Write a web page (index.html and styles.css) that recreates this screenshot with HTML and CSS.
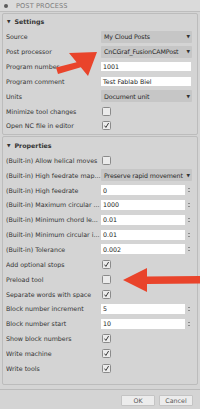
FILE: index.html
```html
<!DOCTYPE html>
<html>
<head>
<meta charset="utf-8">
<link rel="stylesheet" href="styles.css">
</head>
<body>
<div class="panel">
  <div class="titlebar"><span class="dot"></span><span class="title">POST PROCESS</span></div>
  <div class="content">
    <div class="group">
      <div class="group-head"><span class="tri">▼</span>Settings</div>
      <div class="row"><span class="label">Source</span><span class="select"><span class="val">My Cloud Posts</span><span class="caret">▼</span></span></div>
      <div class="row"><span class="label">Post processor</span><span class="select"><span class="val">CnCGraf_FusionCAMPost</span><span class="caret">▼</span></span></div>
      <div class="row"><span class="label">Program number</span><span class="text">1001</span></div>
      <div class="row"><span class="label">Program comment</span><span class="text">Test Fablab Biel</span></div>
      <div class="row"><span class="label">Units</span><span class="select"><span class="val">Document unit</span><span class="caret">▼</span></span></div>
      <div class="row"><span class="label">Minimize tool changes</span><span class="check"></span></div>
      <div class="row"><span class="label">Open NC file in editor</span><span class="check on"><svg viewBox="0 0 8 8"><path d="M1.8 4.2 L3.3 6.2 L6.4 1.2"/></svg></span></div>
    </div>
    <div class="group props">
      <div class="group-head"><span class="tri">▼</span>Properties</div>
      <div class="row"><span class="label">(Built-in) Allow helical moves</span><span class="check"></span></div>
      <div class="row"><span class="label">(Built-in) High feedrate map...</span><span class="select"><span class="val">Preserve rapid movement</span><span class="caret">▼</span></span></div>
      <div class="row"><span class="label">(Built-in) High feedrate</span><span class="num"><span class="field">0</span><span class="spin"><i class="up"></i><i class="down"></i></span></span></div>
      <div class="row"><span class="label">(Built-in) Maximum circular ...</span><span class="num"><span class="field">1000</span><span class="spin"><i class="up"></i><i class="down"></i></span></span></div>
      <div class="row"><span class="label">(Built-in) Minimum chord le...</span><span class="num"><span class="field">0.01</span><span class="spin"><i class="up"></i><i class="down"></i></span></span></div>
      <div class="row"><span class="label">(Built-in) Minimum circular i...</span><span class="num"><span class="field">0.01</span><span class="spin"><i class="up"></i><i class="down"></i></span></span></div>
      <div class="row"><span class="label">(Built-in) Tolerance</span><span class="num"><span class="field">0.002</span><span class="spin"><i class="up"></i><i class="down"></i></span></span></div>
      <div class="row"><span class="label">Add optional stops</span><span class="check on"><svg viewBox="0 0 8 8"><path d="M1.8 4.2 L3.3 6.2 L6.4 1.2"/></svg></span></div>
      <div class="row"><span class="label">Preload tool</span><span class="check"></span></div>
      <div class="row"><span class="label">Separate words with space</span><span class="check on"><svg viewBox="0 0 8 8"><path d="M1.8 4.2 L3.3 6.2 L6.4 1.2"/></svg></span></div>
      <div class="row"><span class="label">Block number increment</span><span class="num"><span class="field">5</span><span class="spin"><i class="up"></i><i class="down"></i></span></span></div>
      <div class="row"><span class="label">Block number start</span><span class="num"><span class="field">10</span><span class="spin"><i class="up"></i><i class="down"></i></span></span></div>
      <div class="row"><span class="label">Show block numbers</span><span class="check on"><svg viewBox="0 0 8 8"><path d="M1.8 4.2 L3.3 6.2 L6.4 1.2"/></svg></span></div>
      <div class="row"><span class="label">Write machine</span><span class="check on"><svg viewBox="0 0 8 8"><path d="M1.8 4.2 L3.3 6.2 L6.4 1.2"/></svg></span></div>
      <div class="row"><span class="label">Write tools</span><span class="check on"><svg viewBox="0 0 8 8"><path d="M1.8 4.2 L3.3 6.2 L6.4 1.2"/></svg></span></div>
    </div>
  </div>
  <div class="footer">
    <span class="btn ok">OK</span>
    <span class="btn cancel">Cancel</span>
  </div>
  <svg class="arrows" viewBox="0 0 200 409" width="200" height="409">
    <polygon points="97,52 88,76 80.8,67.3 58,74 56,67.5 76.6,62.2 69,53"/>
    <polygon points="123,280 147,268 147,276.5 200,276 200,283.5 147,284 147,292"/>
  </svg>
</div>
</body>
</html>
```

FILE: styles.css
```css
html, body {
  margin: 0;
  padding: 0;
  background: #d4d4d4;
}
body {
  width: 200px;
  height: 409px;
  overflow: hidden;
  font-family: "DejaVu Sans", "Liberation Sans", sans-serif;
  font-size: 6.3px;
  color: #2e2e2e;
}
.panel {
  position: relative;
  width: 200px;
  height: 409px;
  display: flex;
  flex-direction: column;
}
.titlebar {
  height: 12px;
  border-bottom: 1px solid #bdbdbd;
  background: #dadada;
  display: flex;
  align-items: center;
}
.dot {
  width: 4px;
  height: 4px;
  border-radius: 2px;
  background: #5c5c5c;
  margin-left: 4px;
  margin-right: 8px;
}
.title {
  color: #7c7c7c;
  font-size: 6.6px;
  letter-spacing: 0.1px;
}
.content {
  padding: 1px 2px 4px 2px;
  display: flex;
  flex-direction: column;
  gap: 1px;
}
.group {
  border: 1px solid #bcbcbc;
  border-radius: 2px;
  padding: 0 4px 1px 3px;
}
.group.props {
  padding-bottom: 8px;
}
.group-head {
  height: 15px;
  display: flex;
  align-items: center;
  font-weight: bold;
  color: #333;
}
.group.props .group-head {
  height: 15.6px;
}
.tri {
  font-size: 4.5px;
  margin-left: 1px;
  margin-right: 4px;
  font-weight: normal;
}
.row {
  height: 14.85px;
  display: grid;
  grid-template-columns: 95px 91px;
  align-items: center;
}
.label {
  white-space: nowrap;
  overflow: hidden;
  color: #333;
}
.select {
  height: 12px;
  background: #c6c6c6;
  border-radius: 1px;
  display: flex;
  align-items: center;
  justify-content: space-between;
  padding: 0 2px 0 3px;
  color: #262626;
}
.val {
  white-space: nowrap;
  letter-spacing: -0.12px;
}
.caret {
  font-size: 4.5px;
  color: #333;
  flex: none;
}
.text {
  height: 9px;
  background: #fff;
  width: 90px;
  display: flex;
  align-items: center;
  padding-left: 2px;
  box-sizing: border-box;
  color: #222;
}
.num {
  display: flex;
  align-items: center;
  height: 10px;
}
.field {
  width: 84px;
  height: 10px;
  background: #fff;
  display: flex;
  align-items: center;
  padding-left: 2px;
  box-sizing: border-box;
  color: #222;
}
.spin {
  width: 7px;
  height: 10px;
  display: flex;
  flex-direction: column;
  align-items: center;
  justify-content: center;
  gap: 2px;
}
.spin i {
  width: 0;
  height: 0;
  border-left: 1.2px solid transparent;
  border-right: 1.2px solid transparent;
}
.spin .up { border-bottom: 1.5px solid #444; }
.spin .down { border-top: 1.5px solid #444; }
.check {
  width: 7px;
  height: 7px;
  margin-left: 1px;
  border: 1px solid #8a8a8a;
  border-radius: 1.5px;
  background: #ebebeb;
  display: flex;
}
.check svg {
  width: 7px;
  height: 7px;
}
.check path {
  fill: none;
  stroke: #1e1e1e;
  stroke-width: 1;
}
.footer {
  margin-top: auto;
  border-top: 1px solid #bababa;
  height: 21px;
  display: flex;
  justify-content: flex-end;
  align-items: flex-start;
  gap: 4px;
  padding: 5px 7px 0 0;
  box-sizing: border-box;
}
.btn {
  height: 9px;
  background: #ececec;
  border: 1px solid #c4c4c4;
  border-radius: 1px;
  display: flex;
  align-items: center;
  justify-content: center;
  color: #555;
}
.btn.ok { width: 32px; }
.btn.cancel { width: 32px; }
.arrows {
  position: absolute;
  left: 0;
  top: 0;
  pointer-events: none;
}
.arrows polygon {
  fill: #e9442b;
}
```
